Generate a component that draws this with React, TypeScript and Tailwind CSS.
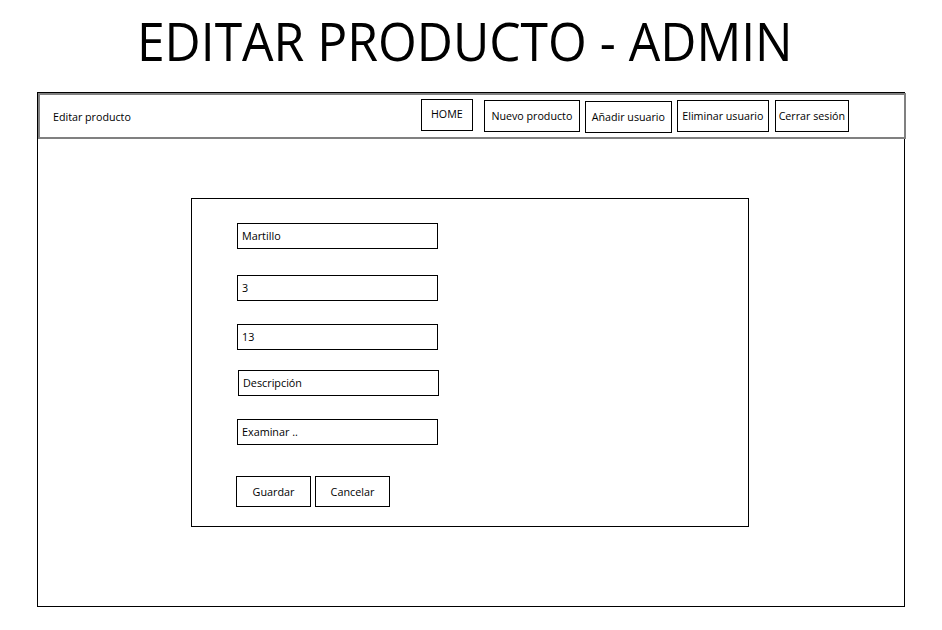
import React from "react";

const font = { fontFamily: '"Open Sans", "Noto Sans", sans-serif' };

function Field({ value, className }: { value: string; className: string }) {
  return (
    <div
      className={`w-[201px] h-[26px] border border-black flex items-center pl-[4px] text-[10.8px] text-black ${className}`}
    >
      {value}
    </div>
  );
}

export default function App() {
  return (
    <div className="w-[942px] h-[630px] bg-white overflow-hidden" style={font}>
      <div className="h-[92px] pt-[9px] flex justify-center">
        <div className="text-[53px] leading-[64px] text-black scale-x-[0.94] ml-[-12px] whitespace-nowrap">
          EDITAR PRODUCTO - ADMIN
        </div>
      </div>
      <div className="ml-[37px] w-[868px] h-[515px] border border-black">
        <div className="w-[868px] h-[46px] border-2 border-[#808080] flex items-start text-[10.7px] text-black">
          <div className="pl-[13px] mt-[14px]">Editar producto</div>
          <div className="ml-[290px] mt-[4px] w-[52px] h-[32px] border border-black flex items-center justify-center pb-[1px]">
            HOME
          </div>
          <div className="ml-[11px] mt-[5px] w-[96px] h-[32px] border border-black flex items-center justify-center">
            Nuevo producto
          </div>
          <div className="ml-[5px] mt-[6px] w-[87px] h-[32px] border border-black flex items-center justify-center">
            Añadir usuario
          </div>
          <div className="ml-[5px] mt-[5px] w-[92px] h-[32px] border border-black flex items-center justify-center">
            Eliminar usuario
          </div>
          <div className="ml-[6px] mt-[5px] w-[74px] h-[32px] border border-black flex items-center justify-center">
            Cerrar sesión
          </div>
        </div>
        <div className="ml-[153px] mt-[59px] w-[558px] h-[329px] border border-black pl-[45px] pt-[24px] flex flex-col items-start">
          <Field value="Martillo" className="" />
          <Field value="3" className="mt-[26px]" />
          <Field value="13" className="mt-[23px]" />
          <Field value="Descripción" className="mt-[20px] ml-[1px]" />
          <Field value="Examinar .." className="mt-[23px]" />
          <div className="mt-[31px] ml-[-1px] flex gap-[4px] text-[10.8px] text-black">
            <div className="w-[75px] h-[31px] border border-black flex items-center justify-center pt-[2px]">
              Guardar
            </div>
            <div className="w-[75px] h-[31px] border border-black flex items-center justify-center pt-[2px]">
              Cancelar
            </div>
          </div>
        </div>
      </div>
    </div>
  );
}
